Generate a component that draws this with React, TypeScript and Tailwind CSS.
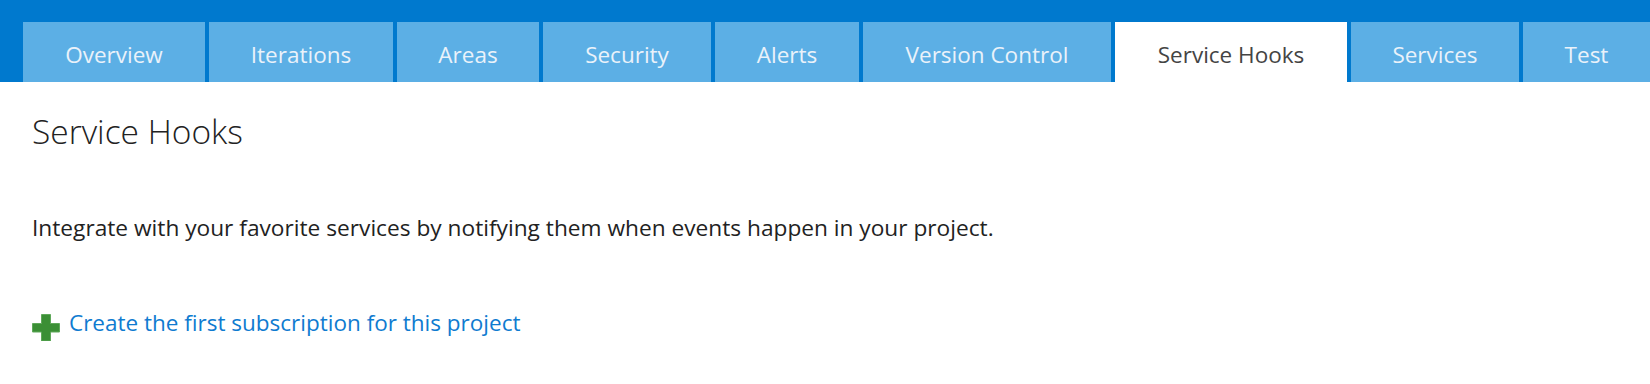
import React from "react";

const tabs: { label: string; w: string; active?: boolean }[] = [
  { label: "Overview", w: "w-[182px]" },
  { label: "Iterations", w: "w-[184px]" },
  { label: "Areas", w: "w-[142px]" },
  { label: "Security", w: "w-[168px]" },
  { label: "Alerts", w: "w-[144px]" },
  { label: "Version Control", w: "w-[248px]" },
  { label: "Service Hooks", w: "w-[232px]", active: true },
  { label: "Services", w: "w-[168px]" },
  { label: "Test", w: "w-[127px]" },
];

function PlusIcon() {
  return (
    <svg width="28" height="27" viewBox="0 0 28 27" className="shrink-0 self-start mt-[5px]">
      <path
        d="M9.5 0.5h9v9h9v8.5h-9v9h-9v-9h-9v-8.5h9z"
        fill="#3b8f35"
        stroke="#5fa85a"
        strokeWidth="1"
      />
    </svg>
  );
}

export default function App() {
  return (
    <div className="w-[1650px] h-[384px] bg-white overflow-hidden font-['Open_Sans',sans-serif]">
      <div className="bg-[#0079ce] pt-[22px] pl-[23px] flex gap-[4px] overflow-hidden">
        {tabs.map((t) => (
          <div
            key={t.label}
            className={`${t.w} shrink-0 h-[60px] flex items-center justify-center pt-[6px] text-[22.5px] ${
              t.active ? "bg-white text-[#444444]" : "bg-[#5cafe5] text-[#eaf2fa]"
            }`}
          >
            {t.label}
          </div>
        ))}
      </div>
      <div className="pl-[32px]">
        <h1 className="mt-[29px] text-[33.5px] leading-[40px] font-light text-[#222222]">Service Hooks</h1>
        <p className="mt-[63px] text-[22.7px] leading-[28px] text-[#222222]">
          Integrate with your favorite services by notifying them when events happen in your project.
        </p>
        <a className="mt-[67px] flex gap-[9px] text-[22.5px] leading-[28px] text-[#0f7bd0] cursor-pointer">
          <PlusIcon />
          <span>Create the first subscription for this project</span>
        </a>
      </div>
    </div>
  );
}
